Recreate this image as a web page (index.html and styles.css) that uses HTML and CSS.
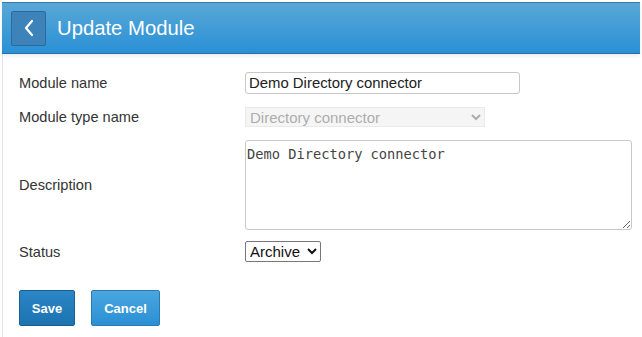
FILE: index.html
```html
<!DOCTYPE html>
<html>
<head>
  <meta charset="UTF-8">
  <title>Update Module</title>
  <link rel="stylesheet" href="styles.css">
</head>
<body>
  <div class="page">
    <div class="header">
      <a class="back-btn" href="#">
        <svg width="12" height="20" viewBox="0 0 12 20"><path d="M9 3 L3 10 L9 17" fill="none" stroke="#fff" stroke-width="2.2" stroke-linecap="round" stroke-linejoin="round"/></svg>
      </a>
      <h1>Update Module</h1>
    </div>

    <form class="form">
      <div class="row row-name">
        <label>Module name</label>
        <input type="text" class="text-input" value="Demo Directory connector">
      </div>
      <div class="row row-type">
        <label>Module type name</label>
        <select class="type-select" disabled>
          <option>Directory connector</option>
        </select>
      </div>
      <div class="row row-desc">
        <label>Description</label>
        <textarea class="desc">Demo Directory connector</textarea>
      </div>
      <div class="row row-status">
        <label>Status</label>
        <select class="status-select">
          <option>Archive</option>
        </select>
      </div>
      <div class="actions">
        <button type="button" class="btn btn-save">Save</button>
        <button type="button" class="btn btn-cancel">Cancel</button>
      </div>
    </form>
  </div>
</body>
</html>
```
FILE: styles.css
```css
body{
  margin: 0;
  background: #fff;
  font-family: "Liberation Sans", Arial, sans-serif;
}
.page{
  margin: 2px 2px 0 2px;
  border-left: 1px solid #e4e4e4;
  min-height: 335px;
}
.header{
  height: 50px;
  display: flex;
  align-items: center;
  padding-left: 9px;
  background: linear-gradient(#58a8d6, #2a90d6);
  border-top: 1px solid #3a78a8;
  border-bottom: 1px solid #2a6fa8;
  box-shadow: 0 2px 4px rgba(0,0,0,0.08);
  margin-left: -1px;
}
.back-btn{
  width: 33px;
  height: 33px;
  display: flex;
  align-items: center;
  justify-content: center;
  background: #3d82b8;
  border: 1px solid #2d6a9c;
  border-radius: 2px;
}
.header h1{
  margin: 0 0 0 11px;
  color: #fff;
  font-size: 20.3px;
  font-weight: normal;
}
.form{
  padding: 18px 0 0 16px;
}
.row{
  display: flex;
  align-items: center;
}
.row label{
  width: 226px;
  font-size: 14.6px;
  color: #333;
}
.text-input{
  width: 275px;
  height: 22px;
  box-sizing: border-box;
  border: 1px solid #c8c8c8;
  border-radius: 3px;
  padding: 0 3px;
  font-family: "Liberation Sans", Arial, sans-serif;
  font-size: 14.9px;
  color: #222;
}
.row-type{
  margin-top: 13px;
}
.type-select{
  width: 240px;
  height: 20px;
  box-sizing: border-box;
  border: 1px solid #e2e2e2;
  background: #f2f2f2;
  color: #8a8a8a;
  font-family: "Liberation Sans", Arial, sans-serif;
  font-size: 15px;
  padding: 0;
}
.row-desc{
  margin-top: 13px;
}
.desc{
  width: 387px;
  height: 90px;
  box-sizing: border-box;
  border: 1px solid #c8c8c8;
  border-radius: 3px;
  padding: 5px 1px;
  font-family: "DejaVu Sans Mono", monospace;
  font-size: 13.7px;
  color: #444;
  resize: both;
}
.row-status{
  margin-top: 11px;
}
.status-select{
  width: 76px;
  height: 21px;
  border: 1px solid #777;
  border-radius: 2px;
  background: #fff;
  color: #111;
  font-family: "Liberation Sans", Arial, sans-serif;
  font-size: 15px;
  padding: 0;
}
.actions{
  display: flex;
  gap: 16px;
  margin-top: 28px;
}
.btn{
  height: 36px;
  border-radius: 2px;
  color: #fff;
  font-family: "Liberation Sans", Arial, sans-serif;
  font-weight: bold;
  font-size: 13px;
  cursor: pointer;
}
.btn-save{
  width: 56px;
  background: linear-gradient(#2a86c6, #1d73b0);
  border: 1px solid #1b5f92;
}
.btn-cancel{
  width: 69px;
  background: linear-gradient(#4aa6de, #2a90d4);
  border: 1px solid #2a7ab4;
}
```
